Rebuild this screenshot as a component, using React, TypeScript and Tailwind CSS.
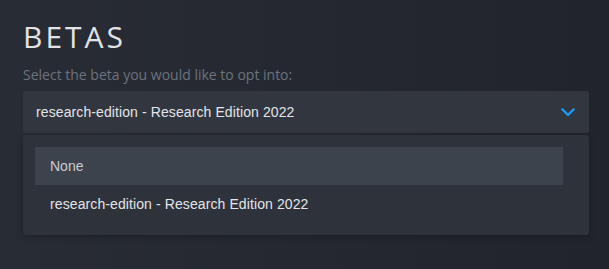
import React from "react";

export default function App() {
  return (
    <div className="w-[609px] h-[269px] overflow-hidden bg-gradient-to-r from-[#282c35] to-[#21242c] pl-[23px] pr-[20px] pt-[18px]">
      <h1
        className="text-[30px] leading-[37px] tracking-[3px] text-[#e1e3e6] font-normal"
        style={{ fontFamily: '"Open Sans", sans-serif' }}
      >
        BETAS
      </h1>
      <p
        className="mt-[10px] text-[14px] leading-[19px] text-[#6d737c]"
        style={{ fontFamily: '"Open Sans", sans-serif' }}
      >
        Select the beta you would like to opt into:
      </p>
      <div style={{ fontFamily: '"Liberation Sans", Arial, sans-serif' }}>
        <div className="mt-[7px] w-[566px] h-[42px] rounded-[3px] bg-[#32363f] flex items-center justify-between pl-[13px] pr-[14px]">
          <span className="text-[14px] tracking-[0.1px] text-[#e3e5e8]">research-edition - Research Edition 2022</span>
          <svg width="14" height="9" viewBox="0 0 14 9" fill="none">
            <path d="M1.5 1.5 L7 7 L12.5 1.5" stroke="#1a9fff" strokeWidth="2.2" strokeLinecap="square" />
          </svg>
        </div>
        <div className="mt-[2px] w-[566px] h-[100px] rounded-[3px] bg-[#2e323b] pt-[12px] pl-[12px] pr-[26px] shadow-[0_2px_6px_rgba(0,0,0,0.25)]">
          <div className="h-[38px] bg-[#3d434d] flex items-center pl-[15px] text-[14px] text-[#c9ccd1]">None</div>
          <div className="h-[38px] flex items-center pl-[15px] text-[14px] tracking-[0.1px] text-[#e3e5e8]">
            research-edition - Research Edition 2022
          </div>
        </div>
      </div>
    </div>
  );
}
